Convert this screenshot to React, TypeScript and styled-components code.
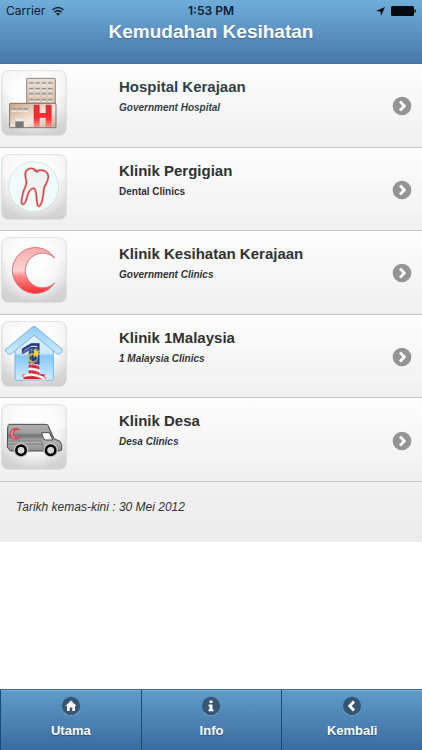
import React from "react";
import styled, { createGlobalStyle } from "styled-components";

const GlobalStyle = createGlobalStyle`
  * { box-sizing: border-box; }
  body { margin: 0; background: #fff; font-family: "Liberation Sans", Arial, sans-serif; }
`;

const Page = styled.div`
  display: flex;
  flex-direction: column;
  min-height: 100vh;
`;

const Header = styled.header`
  height: 64px;
  background: linear-gradient(#6fadd9, #4878ad);
  border-bottom: 1px solid #4170a3;
`;

const StatusBar = styled.div`
  display: grid;
  grid-template-columns: 1fr auto 1fr;
  align-items: center;
  height: 20px;
  padding: 2px 6px 0;
  font-family: Inter, sans-serif;
  font-size: 12px;
  line-height: 18px;
  color: #10202c;
`;

const Carrier = styled.span`
  display: flex;
  align-items: center;
  gap: 6px;
`;

const Clock = styled.span`
  font-weight: 600;
`;

const Indicators = styled.span`
  display: flex;
  align-items: center;
  justify-content: flex-end;
  gap: 6px;
`;

const Title = styled.h1`
  margin: 0;
  font-size: 19px;
  line-height: 24px;
  text-align: center;
  color: #fff;
  text-shadow: 0 1px 1px #3e6790;
`;

const List = styled.ul`
  display: grid;
  grid-auto-rows: 1fr;
  min-height: 418px;
  margin: 0;
  padding: 0;
  list-style: none;
`;

const Item = styled.li`
  display: flex;
  border-bottom: 1px solid #c4c4c4;
  background: linear-gradient(#fdfdfd, #f0f0f0);
`;

const ItemLink = styled.a`
  flex: 1;
  display: grid;
  grid-template-columns: 118px 1fr auto;
  padding: 6px 10px 6px 1px;
  color: #2f3133;
  text-decoration: none;
  text-shadow: 0 1px 0 #fff;
`;

const Labels = styled.div`
  padding-top: 7px;
`;

const Name = styled.h2<{ $tinted?: boolean }>`
  margin: 0;
  font-size: 15px;
  line-height: 20px;
  color: ${(p) => (p.$tinted ? "#2f3e46" : "#2f3133")};
`;

const Subtitle = styled.p<{ $italic: boolean; $tinted?: boolean }>`
  margin: 4px 0 0;
  font-size: 10px;
  line-height: 14px;
  font-weight: bold;
  font-style: ${(p) => (p.$italic ? "italic" : "normal")};
  color: ${(p) => (p.$tinted ? "#2f3e46" : "#2f3133")};
`;

const TileArt = styled.svg`
  overflow: visible;
`;

const Chevron = styled.svg`
  align-self: center;
  margin-top: 2px;
`;

const Updated = styled.p`
  margin: 0;
  padding: 16px 16px 26px;
  font-size: 12px;
  line-height: 18px;
  font-style: italic;
  color: #333;
  background: linear-gradient(#f1f1f1, #ececec);
`;

const TabBar = styled.nav`
  display: grid;
  grid-template-columns: repeat(3, 1fr);
  margin-top: auto;
  border-top: 1px solid #3a6b96;
`;

const Tab = styled.a`
  display: flex;
  flex-direction: column;
  align-items: center;
  gap: 6px;
  height: 60px;
  padding-top: 6px;
  border-left: 1px solid #144c7a;
  box-shadow: inset 0 1px 0 #7eb1d6;
  background: linear-gradient(#5f9cc8, #3a6ba1);
  color: #fff;
  font-size: 13px;
  line-height: 18px;
  font-weight: bold;
  text-decoration: none;
  text-shadow: 0 1px 1px #284b70;
`;

const Tile = ({ id, children }: { id: string; children: React.ReactNode }) => (
  <TileArt width="66" height="66" viewBox="3 17 198 198" aria-hidden="true">
    <defs>
      <linearGradient id={id + "bg"} x2="0" y2="1">
        <stop stopColor="#eeeeee" />
        <stop offset=".5" stopColor="#e0e0e0" />
        <stop offset="1" stopColor="#d0d0d0" />
      </linearGradient>
      <radialGradient id={id + "glow"} cx=".5" cy=".42" r=".6">
        <stop stopColor="#fff" />
        <stop offset=".6" stopColor="#fff" stopOpacity=".75" />
        <stop offset="1" stopColor="#fff" stopOpacity="0" />
      </radialGradient>
    </defs>
    <rect x="5" y="19" width="194" height="194" rx="20" fill={`url(#${id}bg)`} stroke="#d6d6d6" strokeWidth="2" />
    <rect x="7" y="20" width="190" height="190" rx="20" fill={`url(#${id}glow)`} />
    <path d="M8 90Q100 122 196 90V40Q196 21 178 21H26Q8 21 8 40Z" fill="#fff" opacity=".45" />
    {children}
  </TileArt>
);

const Hospital = () => (
  <Tile id="hospital">
    <defs>
      <linearGradient id="tower" x2="0" y2="1"><stop stopColor="#eadfd7" /><stop offset="1" stopColor="#d8b79c" /></linearGradient>
      <linearGradient id="wing" x2="1" y2="1"><stop stopColor="#cda385" /><stop offset=".6" stopColor="#f5ebe2" /><stop offset="1" stopColor="#cba78a" /></linearGradient>
      <linearGradient id="pane" x2="0" y2="1"><stop stopColor="#808080" /><stop offset="1" stopColor="#fff" /></linearGradient>
      <linearGradient id="redH" x2="0" y2="1"><stop stopColor="#df3038" /><stop offset=".6" stopColor="#fa2a30" /><stop offset="1" stopColor="#ee9695" /></linearGradient>
    </defs>
    <rect x="80" y="42" width="86" height="78" rx="2" fill="url(#tower)" stroke="#8d8580" strokeWidth="3" />
    {[54, 71, 87, 104].map((y) => [87, 106, 125, 144].map((x) => (
      <rect key={`${x}-${y}`} x={x} y={y} width="14" height="9" fill="url(#pane)" />
    )))}
    <rect x="29" y="117" width="139" height="73" rx="2" fill="url(#wing)" stroke="#7d746e" strokeWidth="3" />
    {[34, 52, 70].map((x) => <rect key={x} x={x} y="132" width="15" height="10" fill="url(#pane)" />)}
    <rect x="46" y="168" width="25" height="22" fill="#787878" />
    <rect x="46" y="163" width="25" height="8" fill="#eee" />
    <path d="M101 121h18v25h18v-25h18v67h-18v-28h-18v28h-18z" fill="url(#redH)" />
  </Tile>
);

const Tooth = () => (
  <Tile id="tooth">
    <circle cx="101" cy="115" r="75" fill="#effcf9" stroke="#c2dcd5" strokeWidth="2" />
    <path d="M76 77C76 60 99 54 109 68C123 63 143 65 145 85C145 102 133 108 131 125C130 144 126 164 120 172C115 178 112 171 111 162C109 145 109 122 102 120C92 119 85 131 81 147C78 160 73 169 67 168C61 164 66 150 68 139C71 119 84 108 78 94Q76 87 76 77Z" fill="#f1f3f3" stroke="#e7999a" strokeWidth="7" />
    <path d="M76 77C76 60 99 54 109 68C123 63 143 65 145 85C145 102 133 108 131 125C130 144 126 164 120 172C115 178 112 171 111 162C109 145 109 122 102 120C92 119 85 131 81 147C78 160 73 169 67 168C61 164 66 150 68 139C71 119 84 108 78 94Q76 87 76 77M101 66Q107 71 116 72" fill="none" stroke="#c4343a" strokeWidth="3" />
  </Tile>
);

const Crescent = () => (
  <Tile id="crescent">
    <defs><linearGradient id="moon" x2="0" y2="1"><stop stopColor="#f6aaa9" /><stop offset=".5" stopColor="#fbd5d4" /><stop offset=".62" stopColor="#ff8b8b" /><stop offset="1" stopColor="#fb2a32" /></linearGradient></defs>
    <path d="M164 80A69 69 0 1 0 164 155A52 52 0 1 1 164 80Z" fill="url(#moon)" stroke="#cf7a7d" strokeWidth="3" />
  </Tile>
);

const House = () => (
  <Tile id="house">
    <defs>
      <linearGradient id="roof" x2="0" y2="1"><stop stopColor="#91cefa" /><stop offset="1" stopColor="#d0ebff" /></linearGradient>
      <linearGradient id="wall" x2="0" y2="1"><stop stopColor="#f1f9ff" /><stop offset=".45" stopColor="#cae7fd" /><stop offset=".5" stopColor="#84c7fc" /><stop offset="1" stopColor="#d0eeff" /></linearGradient>
      <pattern id="flag" x="70" y="82" width="64" height="115" patternUnits="userSpaceOnUse">
        <rect width="64" height="115" fill="#263b86" />
        <path d="M0 23Q24 10 64 30V38Q24 18 0 34Z" fill="#4e62a9" />
        <path d="M38 17l3 9 9-3-6 8 9 5-10 1 1 10-7-7-7 6 2-9-9-3 10-3-2-9z" fill="#f5d329" />
        <path d="M38 38C18 29 12 50 25 55C35 59 40 50 43 47C40 63 19 65 13 50C10 34 30 25 38 38Z" fill="#f5d329" />
        <path d="M0 67Q25 56 64 73V115H0Z" fill="#fff" />
        <path d="M0 70Q25 58 64 78V87Q25 68 0 79ZM0 87Q25 75 64 96V104Q25 85 0 97ZM0 104Q25 92 64 112V115H0Z" fill="#cf2334" />
      </pattern>
    </defs>
    <path d="M45 92L102 48L160 92V188Q160 195 152 195H53Q45 195 45 188Z" fill="url(#wall)" stroke="#78b6e4" strokeWidth="3" />
    <path d="M102 33Q108 34 115 42L187 102Q189 109 178 117L170 114L102 60L34 115Q25 121 15 104L89 42Q96 35 102 33Z" fill="url(#roof)" stroke="#78b3e0" strokeWidth="3" />
    <text x="100" y="187" textAnchor="middle" fontFamily="DejaVu Serif, serif" fontSize="136" fontWeight="700" fill="url(#flag)" stroke="url(#flag)" strokeWidth="7">1</text>
  </Tile>
);

const Van = () => (
  <Tile id="van">
    <defs><linearGradient id="body" x2="0" y2="1"><stop stopColor="#b2b2b2" /><stop offset=".3" stopColor="#a0a0a0" /><stop offset=".42" stopColor="#747474" /><stop offset=".65" stopColor="#b0b0b0" /><stop offset="1" stopColor="#8d8d8d" /></linearGradient></defs>
    <path d="M27 78Q24 80 23 89L22 147L31 158H178L185 155V139L180 129L162 121L144 81Q142 78 135 78Z" fill="url(#body)" stroke="#4a4a4a" strokeWidth="3" />
    <path d="M125 103H148L158 125H135L130 119Z" fill="#f9f9f9" stroke="#555" strokeWidth="3" />
    <path d="M24 128H125L131 158M24 137H126M145 85L154 108" fill="none" stroke="#666" strokeWidth="2" />
    {[63, 152].map((x) => (
      <g key={x}>
        <circle cx={x} cy="155" r="22" fill="#c4c4c4" />
        <circle cx={x} cy="156" r="14" fill="#f4f4f4" stroke="#080808" strokeWidth="8" />
        <circle cx={x} cy="156" r="7" fill="#ddd" stroke="#bbb" strokeWidth="2" />
      </g>
    ))}
    <path d="M59 95A16 16 0 1 0 60 117A13 13 0 1 1 59 95Z" fill="#f6b2b5" stroke="#d04a55" strokeWidth="4" />
  </Tile>
);

const WifiGlyph = () => (
  <svg width="14" height="10" viewBox="0 0 13 10" aria-hidden="true">
    <path d="M1 4Q6.500-1 12 4M3 6.200Q6.500 3 10 6.200" fill="none" stroke="#10202c" strokeWidth="1.600" />
    <path d="M4.500 7.500Q6.500 6 8.500 7.500L6.500 9.700Z" fill="#10202c" />
  </svg>
);

const BatteryGlyph = () => (
  <svg width="25" height="10" viewBox="0 0 25 10" aria-hidden="true">
    <rect width="23" height="10" rx="1.500" fill="#050a0e" />
    <path d="M23.500 3Q25 3.500 25 5T23.500 7Z" fill="#050a0e" />
  </svg>
);

const ChevronBadge = () => (
  <Chevron width="20" height="20" viewBox="0 0 20 20" aria-hidden="true">
    <circle cx="10" cy="10" r="9.300" fill="#949494" />
    <path d="M8 5.500L12.300 10L8 14.500" fill="none" stroke="#fff" strokeWidth="2.800" />
  </Chevron>
);

const TabGlyph = ({ children }: { children: React.ReactNode }) => (
  <svg width="20" height="20" viewBox="0 0 20 20" aria-hidden="true">
    <circle cx="10" cy="10.700" r="9.200" fill="#8db5d4" />
    <circle cx="10" cy="10" r="9.200" fill="#365673" />
    {children}
  </svg>
);

const places = [
  { name: "Hospital Kerajaan", sub: "Government Hospital", italic: true, tinted: true, Icon: Hospital },
  { name: "Klinik Pergigian", sub: "Dental Clinics", italic: false, Icon: Tooth },
  { name: "Klinik Kesihatan Kerajaan", sub: "Government Clinics", italic: true, Icon: Crescent },
  { name: "Klinik 1Malaysia", sub: "1 Malaysia Clinics", italic: true, Icon: House },
  { name: "Klinik Desa", sub: "Desa Clinics", italic: true, Icon: Van },
];

export default function App() {
  return (
    <Page>
      <GlobalStyle />
      <Header>
        <StatusBar>
          <Carrier>Carrier <WifiGlyph /></Carrier>
          <Clock>1:53 PM</Clock>
          <Indicators>
            <svg width="9" height="9" viewBox="0 0 9 9" aria-hidden="true">
              <path d="M9 0L5 9L4.500 4.500L0 4Z" fill="#050a0e" />
            </svg>
            <BatteryGlyph />
          </Indicators>
        </StatusBar>
        <Title>Kemudahan Kesihatan</Title>
      </Header>
      <main>
        <List>
          {places.map(({ name, sub, italic, tinted, Icon }) => (
            <Item key={name}>
              <ItemLink href="#">
                <Icon />
                <Labels>
                  <Name $tinted={tinted}>{name}</Name>
                  <Subtitle $italic={italic} $tinted={tinted}>{sub}</Subtitle>
                </Labels>
                <ChevronBadge />
              </ItemLink>
            </Item>
          ))}
        </List>
        <Updated>Tarikh kemas-kini : 30 Mei 2012</Updated>
      </main>
      <TabBar>
        <Tab href="#">
          <TabGlyph>
            <path d="M10 4.500L15.500 10H14V15H11.300V11.500H8.700V15H6V10H4.500Z" fill="#fff" />
          </TabGlyph>
          Utama
        </Tab>
        <Tab href="#">
          <TabGlyph>
            <path d="M8.500 4.500h3v2.500h-3zM7.500 8.500h4v5h1v1.800h-5v-1.800h1v-3.200h-1z" fill="#fff" />
          </TabGlyph>
          Info
        </Tab>
        <Tab href="#">
          <TabGlyph>
            <path d="M12 5.500L7.700 10L12 14.500" fill="none" stroke="#fff" strokeWidth="2.800" />
          </TabGlyph>
          Kembali
        </Tab>
      </TabBar>
    </Page>
  );
}
